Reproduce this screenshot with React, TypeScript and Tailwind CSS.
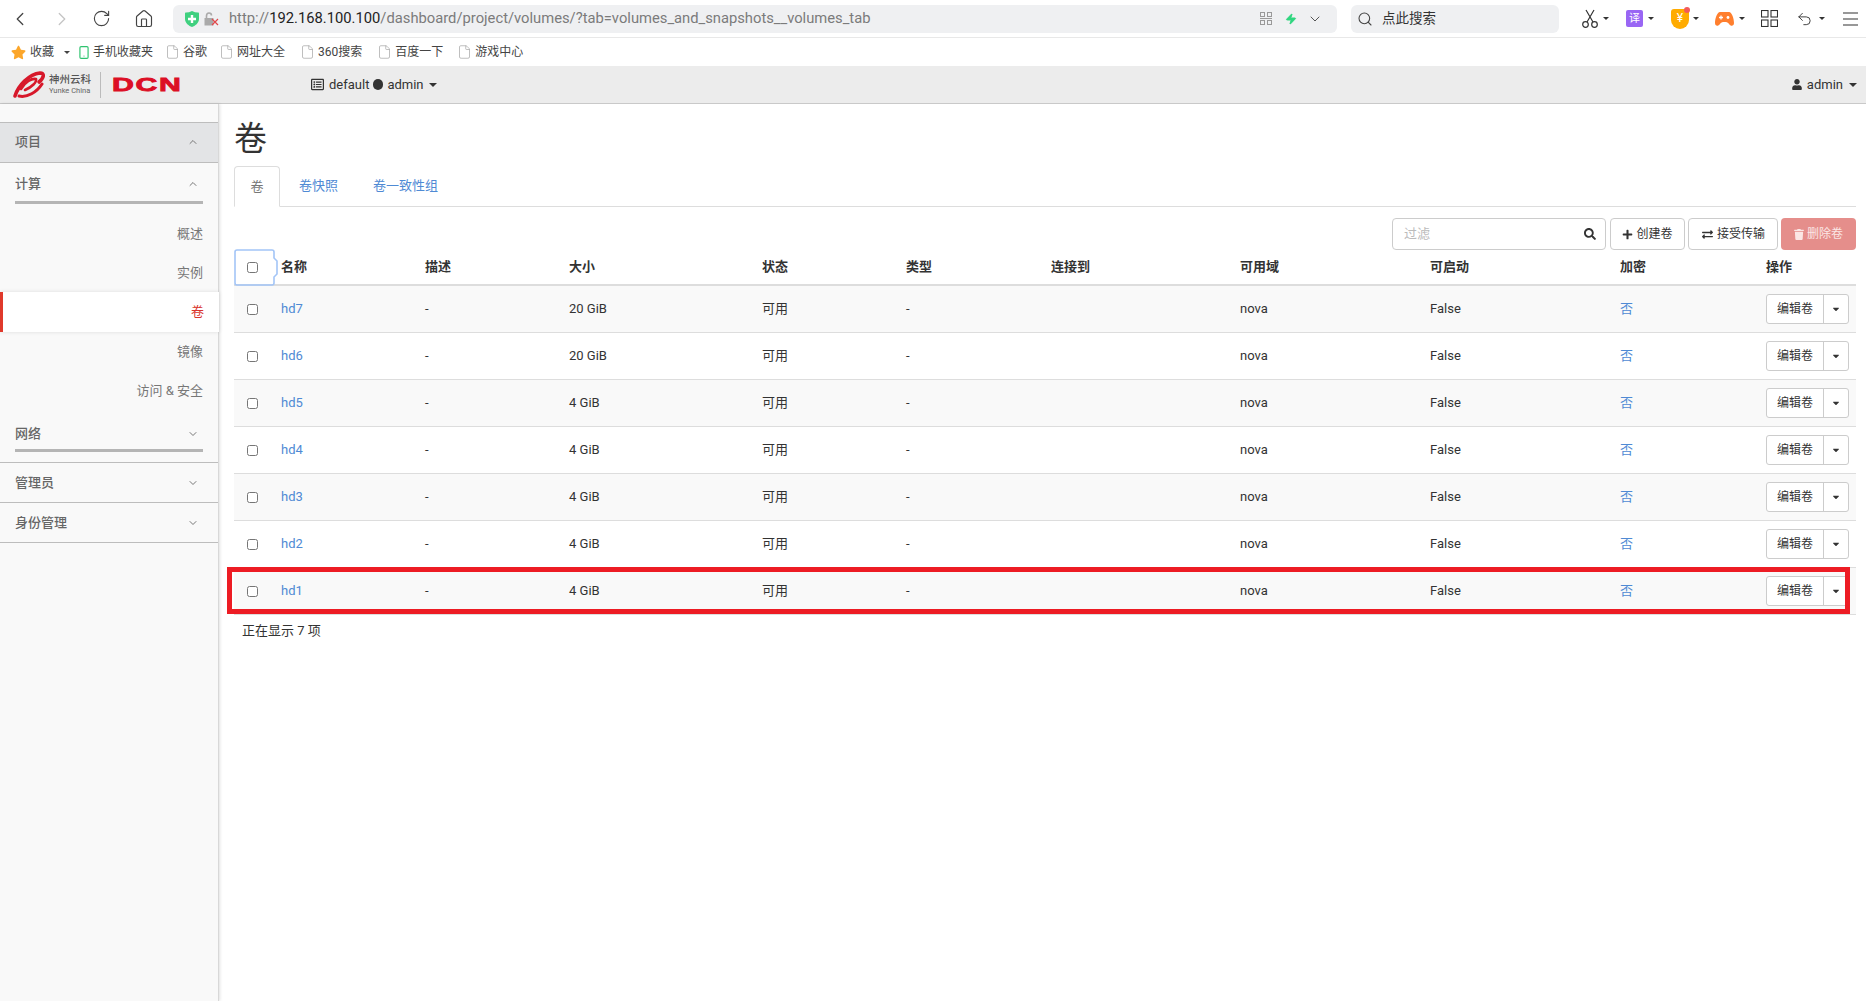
import React from "react";
import { ChevronLeft, ChevronRight, RotateCw, Home, Search, ChevronDown, ChevronUp, File, Undo2, Smartphone, Zap } from "lucide-react";
import { FaStar, FaCaretDown, FaRegListAlt, FaUser, FaSearch, FaPlus, FaExchangeAlt, FaTrash } from "react-icons/fa";

const Caret = ({ className = "" }: { className?: string }) => (
  <span className={"inline-block w-0 h-0 shrink-0 border-l-[4px] border-r-[4px] border-t-[4px] border-l-transparent border-r-transparent border-t-[#333] " + className} />
);
const SmallCaret = ({ className = "" }: { className?: string }) => (
  <span className={"inline-block w-0 h-0 shrink-0 border-l-[3px] border-r-[3px] border-t-[3px] border-l-transparent border-r-transparent border-t-[#333] " + className} />
);

const bookmarks = [
  { t: "谷歌", ml: "ml-[12px]" },
  { t: "网址大全", ml: "ml-[12px]" },
  { t: "360搜索", ml: "ml-[15px]" },
  { t: "百度一下", ml: "ml-[15px]" },
  { t: "游戏中心", ml: "ml-[14px]" },
];

const rows = [
  ["hd7", "20 GiB"],
  ["hd6", "20 GiB"],
  ["hd5", "4 GiB"],
  ["hd4", "4 GiB"],
  ["hd3", "4 GiB"],
  ["hd2", "4 GiB"],
  ["hd1", "4 GiB"],
];

const heads = ["名称", "描述", "大小", "状态", "类型", "连接到", "可用域", "可启动", "加密", "操作"];

function BrowserBar() {
  return (
    <div className="h-[38px] bg-white border-b border-[#e8e8e8] flex items-center shrink-0 text-[#333]">
      <ChevronLeft className="ml-[9px] w-[22px] h-[22px] text-[#444]" strokeWidth={1.4} />
      <ChevronRight className="ml-[20px] w-[22px] h-[22px] text-[#c4c4c4]" strokeWidth={1.4} />
      <RotateCw className="ml-[19px] w-[19px] h-[19px] text-[#444]" strokeWidth={1.4} />
      <Home className="ml-[23px] w-[20px] h-[20px] text-[#444]" strokeWidth={1.4} />
      <div className="ml-[19px] w-[1164px] h-[28px] bg-[#eff0f2] rounded-md flex items-center shrink-0">
        <svg className="ml-[12px] w-[14px] h-[16px]" viewBox="0 0 14 16">
          <path d="M1 1.5C3 1.5 5 1 7 0C9 1 11 1.5 13 1.5C14 1.5 14 2 14 3V8C14 12 10 15 7 16C4 15 0 12 0 8V3C0 2 0 1.5 1 1.5Z" fill="#3fd07f" />
          <path d="M7 4V12M3 8H11" stroke="#fff" strokeWidth="2.4" />
        </svg>
        <svg className="ml-[5px] w-[15px] h-[14px]" viewBox="0 0 15 14" fill="none">
          <path d="M2.5 7V4C2.5 2 3.5 1 5 1C6.5 1 7.5 2 7.5 3.5" stroke="#aaa" strokeWidth="1.6" />
          <rect x="0.5" y="6" width="9" height="7.5" fill="#aaa" />
          <path d="M8 7L14 13M14 7L8 13" stroke="#e2474b" strokeWidth="1.2" />
        </svg>
        <span className="ml-[10px] text-[14.75px] text-[#7b7b7b] whitespace-nowrap">
          http://<span className="text-[#222]">192.168.100.100</span>/dashboard/project/volumes/?tab=volumes_and_snapshots__volumes_tab
        </span>
        <svg className="ml-auto w-[12px] h-[13px]" viewBox="0 0 12 13" fill="none" stroke="#999" strokeWidth="1">
          <rect x="0.5" y="0.5" width="4" height="4" /><rect x="7.5" y="0.5" width="4" height="4" />
          <path d="M0 6.5H12" />
          <rect x="0.5" y="8.5" width="4" height="4" /><rect x="7.5" y="8.5" width="4" height="4" />
        </svg>
        <Zap className="ml-[13px] w-[12px] h-[14px] text-[#2fd67f] fill-[#2fd67f]" />
        <ChevronDown className="ml-[10px] mr-[14px] w-[16px] h-[16px] text-[#555]" strokeWidth={1.5} />
      </div>
      <div className="ml-[14px] w-[208px] h-[28px] bg-[#eff0f2] rounded-md flex items-center shrink-0">
        <Search className="ml-[6px] w-[16px] h-[16px] text-[#444]" strokeWidth={1.6} />
        <span className="ml-[9px] text-[13.5px] text-[#333]">点此搜索</span>
      </div>
      <svg className="ml-[23px] w-[16px] h-[19px] shrink-0" viewBox="0 0 16 19" fill="none" stroke="#333" strokeWidth="1.2">
        <circle cx="3.5" cy="15.5" r="2.8" /><circle cx="12.5" cy="15.5" r="2.8" />
        <path d="M5 13L12 1M11 13L4 1" />
      </svg>
      <SmallCaret className="ml-[5px]" />
      <span className="ml-[17px] w-[17px] h-[17px] shrink-0 rounded-[2px] bg-[#9966f4] text-white text-[11px] leading-[17px] text-center">译</span>
      <SmallCaret className="ml-[5px]" />
      <span className="ml-[17px] relative w-[18px] h-[20px] shrink-0 bg-[#ffab00] rounded-b-[9px] rounded-t-[3px] text-white text-[12px] leading-[18px] text-center">
        ¥
        <span className="absolute -top-[2px] -right-[1px] w-[6px] h-[6px] rounded-full bg-[#f25b5b]" />
      </span>
      <SmallCaret className="ml-[4px]" />
      <svg className="ml-[16px] w-[19px] h-[16px] shrink-0" viewBox="0 0 19 16">
        <path d="M5 1H14C17 1 19 8 19 12C19 15 16 16 14 13C13 11.5 12 11 9.5 11C7 11 6 11.5 5 13C3 16 0 15 0 12C0 8 2 1 5 1Z" fill="#ff7f2e" />
        <path d="M4 6.5H8M6 4.5V8.5" stroke="#fff" strokeWidth="1.3" />
        <circle cx="13" cy="6.5" r="1.4" fill="#fff" />
      </svg>
      <SmallCaret className="ml-[5px]" />
      <svg className="ml-[16px] w-[17px] h-[17px] shrink-0" viewBox="0 0 17 17" fill="none" stroke="#333" strokeWidth="1.1">
        <rect x="0.5" y="0.5" width="6.5" height="6.5" /><rect x="10" y="0.5" width="6.5" height="6.5" />
        <rect x="0.5" y="10" width="6.5" height="6.5" /><rect x="10" y="10" width="6.5" height="6.5" />
      </svg>
      <Undo2 className="ml-[18px] w-[17px] h-[18px] shrink-0 text-[#333]" strokeWidth={1.3} />
      <SmallCaret className="ml-[6px]" />
      <svg className="ml-[18px] w-[15px] h-[14px] shrink-0" viewBox="0 0 15 14" stroke="#333" strokeWidth="1.1">
        <path d="M0 1H15M0 7H15M0 13H15" />
      </svg>
    </div>
  );
}

function BookmarksBar() {
  return (
    <div className="h-[28px] bg-white flex items-center shrink-0 text-[12px] text-[#444]">
      <FaStar className="ml-[11px] w-[15px] h-[15px] text-[#fca62a]" />
      <span className="ml-[4px]">收藏</span>
      <SmallCaret className="ml-[10px] border-t-[#444]" />
      <Smartphone className="ml-[7px] w-[14px] h-[17px] text-[#2fc36f]" strokeWidth={2} />
      <span className="ml-[2px]">手机收藏夹</span>
      {bookmarks.map((b) => (
        <React.Fragment key={b.t}>
          <File className={b.ml + " w-[15px] h-[16px] text-[#aaa]"} strokeWidth={1.2} />
          <span className="ml-[3px]">{b.t}</span>
        </React.Fragment>
      ))}
    </div>
  );
}

function TopHeader() {
  return (
    <div className="h-[38px] bg-[#ececec] border-b border-[#c9c9c9] flex items-center shrink-0 text-[13px] text-[#333]">
      <svg className="ml-[12px] w-[34px] h-[28px] shrink-0" viewBox="0 0 34 28" fill="none" stroke="#d7182a" strokeLinecap="round">
        <path d="M3 25C6 15 17 3 28 2C33 2 32 7 27 11" strokeWidth="3.6" />
        <path d="M7 25C15 27 25 21 30 13" strokeWidth="3" />
        <path d="M9 18C13 11 20 7 24 8C25 11 20 16 13 19" strokeWidth="2.6" />
      </svg>
      <div className="ml-[3px] w-[44px] flex flex-col items-start">
        <span className="text-[10.5px] leading-[12px] font-medium text-[#555] whitespace-nowrap">神州云科</span>
        <span className="text-[7.5px] leading-[9px] text-[#666] whitespace-nowrap">Yunke China</span>
      </div>
      <span className="ml-[7px] w-px h-[26px] bg-[#bbb]" />
      <span className="ml-[11px] w-[68px] text-[18px] leading-[18px] font-bold text-[#dc0f25] font-['Liberation_Sans',sans-serif] [-webkit-text-stroke:0.8px_#dc0f25] tracking-[1px] scale-x-[1.68] origin-left">DCN</span>
      <FaRegListAlt className="ml-[131px] w-[13px] h-[13px] text-[#333]" />
      <span className="ml-[5px]">default</span>
      <span className="ml-[4px] w-[10px] h-[11px] rounded-full bg-[#333]" />
      <span className="ml-[4px]">admin</span>
      <Caret className="ml-[5px]" />
      <FaUser className="ml-auto w-[10px] h-[11px] text-[#333]" />
      <span className="ml-[5px]">admin</span>
      <Caret className="ml-[6px] mr-[9px]" />
    </div>
  );
}

function Sidebar() {
  return (
    <aside className="w-[219px] shrink-0 bg-[#f9f9f9] border-r border-[#d8d8d8] shadow-[1px_0_3px_rgba(0,0,0,0.12)] text-[13px]">
      <div className="h-[18px]" />
      <div className="h-[41px] pb-[2px] bg-[#e3e4e6] border-y border-[#bdbdbd] flex items-center justify-between pl-[15px] pr-[19px] font-medium text-[#666]">
        项目 <ChevronUp className="w-[12px] h-[12px] text-[#777]" />
      </div>
      <div className="mx-[15px] h-[41px] pt-[4px] border-b-[3px] border-[#b5b5b5] flex items-center justify-between pr-[4px] font-medium text-[#666]">
        计算 <ChevronUp className="w-[12px] h-[12px] text-[#777]" />
      </div>
      <div className="pt-[10px] text-[#777]">
        <div className="h-[39px] flex items-center justify-end pr-[15px]">概述</div>
        <div className="h-[39px] flex items-center justify-end pr-[15px]">实例</div>
        <div className="h-[40px] -mr-px bg-white border-l-[3px] border-[#e0392b] flex items-center justify-end pr-[15px] text-[#d9342b] shadow-[0_0_4px_rgba(0,0,0,0.12)]">卷</div>
        <div className="h-[39px] flex items-center justify-end pr-[15px]">镜像</div>
        <div className="h-[39px] flex items-center justify-end pr-[15px]">访问 &amp; 安全</div>
      </div>
      <div className="border-b border-[#bdbdbd] pb-[10px]">
        <div className="mx-[15px] h-[42px] pt-[8px] border-b-[3px] border-[#b5b5b5] flex items-center justify-between pr-[4px] font-medium text-[#666]">
          网络 <ChevronDown className="w-[12px] h-[12px] text-[#777]" />
        </div>
      </div>
      <div className="h-[40px] border-b border-[#bdbdbd] flex items-center justify-between pl-[15px] pr-[19px] font-medium text-[#666]">
        管理员 <ChevronDown className="w-[12px] h-[12px] text-[#777]" />
      </div>
      <div className="h-[40px] border-b border-[#bdbdbd] flex items-center justify-between pl-[15px] pr-[19px] font-medium text-[#666]">
        身份管理 <ChevronDown className="w-[12px] h-[12px] text-[#777]" />
      </div>
    </aside>
  );
}

function Main() {
  return (
    <main className="flex-1 pl-[15px] pr-[10px] text-[13px] text-[#333] min-w-0">
      <h1 className="h-[62px] pt-[11px] text-[33px] leading-[48px] font-normal text-[#333]">卷</h1>
      <div className="h-[41px] pb-[1px] border-b border-[#ddd] flex items-end">
        <div className="w-[46px] h-[41px] -mb-[2px] bg-white border border-[#ddd] border-b-white rounded-t-[4px] flex items-center justify-center text-[#777]">卷</div>
        <div className="ml-[19px] h-[39px] flex items-center text-[#4f8ad4]">卷快照</div>
        <div className="ml-[35px] h-[39px] flex items-center text-[#4f8ad4]">卷一致性组</div>
      </div>
      <div className="h-[43px] flex items-end justify-end">
        <div className="w-[214px] h-[32px] border border-[#ccc] rounded-[4px] flex items-center justify-between pl-[11px] pr-[9px] text-[#bbb]">
          过滤 <FaSearch className="w-[12px] h-[12px] text-[#333]" />
        </div>
        <button className="ml-[4px] w-[75px] h-[32px] border border-[#ccc] rounded-[4px] bg-white flex items-center justify-center gap-[3px] text-[12px] text-[#333]">
          <FaPlus className="w-[11px] h-[11px]" />创建卷
        </button>
        <button className="ml-[3px] w-[90px] h-[32px] border border-[#ccc] rounded-[4px] bg-white flex items-center justify-center gap-[3px] text-[12px] text-[#333]">
          <FaExchangeAlt className="w-[13px] h-[11px]" />接受传输
        </button>
        <button className="ml-[3px] w-[75px] h-[32px] rounded-[4px] bg-[#e58e8b] flex items-center justify-center gap-[3px] text-[12px] text-[#fbe6e5]">
          <FaTrash className="w-[10px] h-[11px]" />删除卷
        </button>
      </div>
      <div className="relative w-[1622px]">
        <table className="w-[1622px] table-fixed border-separate border-spacing-0">
          <colgroup>
            <col className="w-[39px]" /><col className="w-[144px]" /><col className="w-[144px]" /><col className="w-[193px]" /><col className="w-[144px]" /><col className="w-[145px]" /><col className="w-[189px]" /><col className="w-[190px]" /><col className="w-[190px]" /><col className="w-[146px]" /><col className="w-[98px]" />
          </colgroup>
          <thead>
            <tr>
              <th className="h-[36px] border-b-[2px] border-[#ddd] pl-[13px] text-left">
                <input type="checkbox" className="block w-[11px] h-[11px]" />
              </th>
              {heads.map((h) => (
                <th key={h} className="h-[36px] border-b-[2px] border-[#ddd] px-[8px] text-left font-semibold text-[#333]">{h}</th>
              ))}
            </tr>
          </thead>
          <tbody>
            {rows.map(([name, size], i) => (
              <tr key={name} className={i % 2 === 0 ? "bg-[#f9f9f9]" : "bg-white"}>
                <td className="h-[47px] border-b border-[#ddd] pl-[13px]">
                  <input type="checkbox" className="block w-[11px] h-[11px]" />
                </td>
                <td className="border-b border-[#ddd] px-[8px] text-[#4f8ad4]">{name}</td>
                <td className="border-b border-[#ddd] px-[8px]">-</td>
                <td className="border-b border-[#ddd] px-[8px]">{size}</td>
                <td className="border-b border-[#ddd] px-[8px]">可用</td>
                <td className="border-b border-[#ddd] px-[8px]">-</td>
                <td className="border-b border-[#ddd] px-[8px]"></td>
                <td className="border-b border-[#ddd] px-[8px]">nova</td>
                <td className="border-b border-[#ddd] px-[8px]">False</td>
                <td className="border-b border-[#ddd] px-[8px] text-[#4f8ad4]">否</td>
                <td className="border-b border-[#ddd] pl-[8px]">
                  <div className="flex w-[83px] h-[30px] bg-white border border-[#ccc] rounded-[3px] text-[12px]">
                    <span className="w-[57px] border-r border-[#ccc] flex items-center justify-center">编辑卷</span>
                    <span className="flex-1 flex items-center justify-center"><FaCaretDown className="w-[10px] h-[10px] text-[#333]" /></span>
                  </div>
                </td>
              </tr>
            ))}
          </tbody>
        </table>
        <svg className="absolute left-0 top-[-1px] w-[45px] h-[38px]" viewBox="0 0 45 38" fill="none">
          <path d="M3 1H38Q40 1 40 3V9L43 12V25L40 28V34Q40 36 38 36H3Q1 36 1 34V3Q1 1 3 1Z" stroke="#a3c5f7" strokeWidth="1.6" fill="none" />
        </svg>
        <div className="absolute left-[-7px] w-[1623px] top-[317px] h-[47px] border-[5px] border-[#ed1c24]" />
        <div className="pl-[8px] h-[32px] flex items-center text-[#333]">正在显示 7 项</div>
      </div>
    </main>
  );
}

export default function App() {
  return (
    <div className="w-[1866px] h-[1001px] overflow-hidden bg-white flex flex-col font-[Roboto,'Noto_Sans_CJK_SC',sans-serif]">
      <BrowserBar />
      <BookmarksBar />
      <TopHeader />
      <div className="flex-1 flex min-h-0">
        <Sidebar />
        <Main />
      </div>
    </div>
  );
}
